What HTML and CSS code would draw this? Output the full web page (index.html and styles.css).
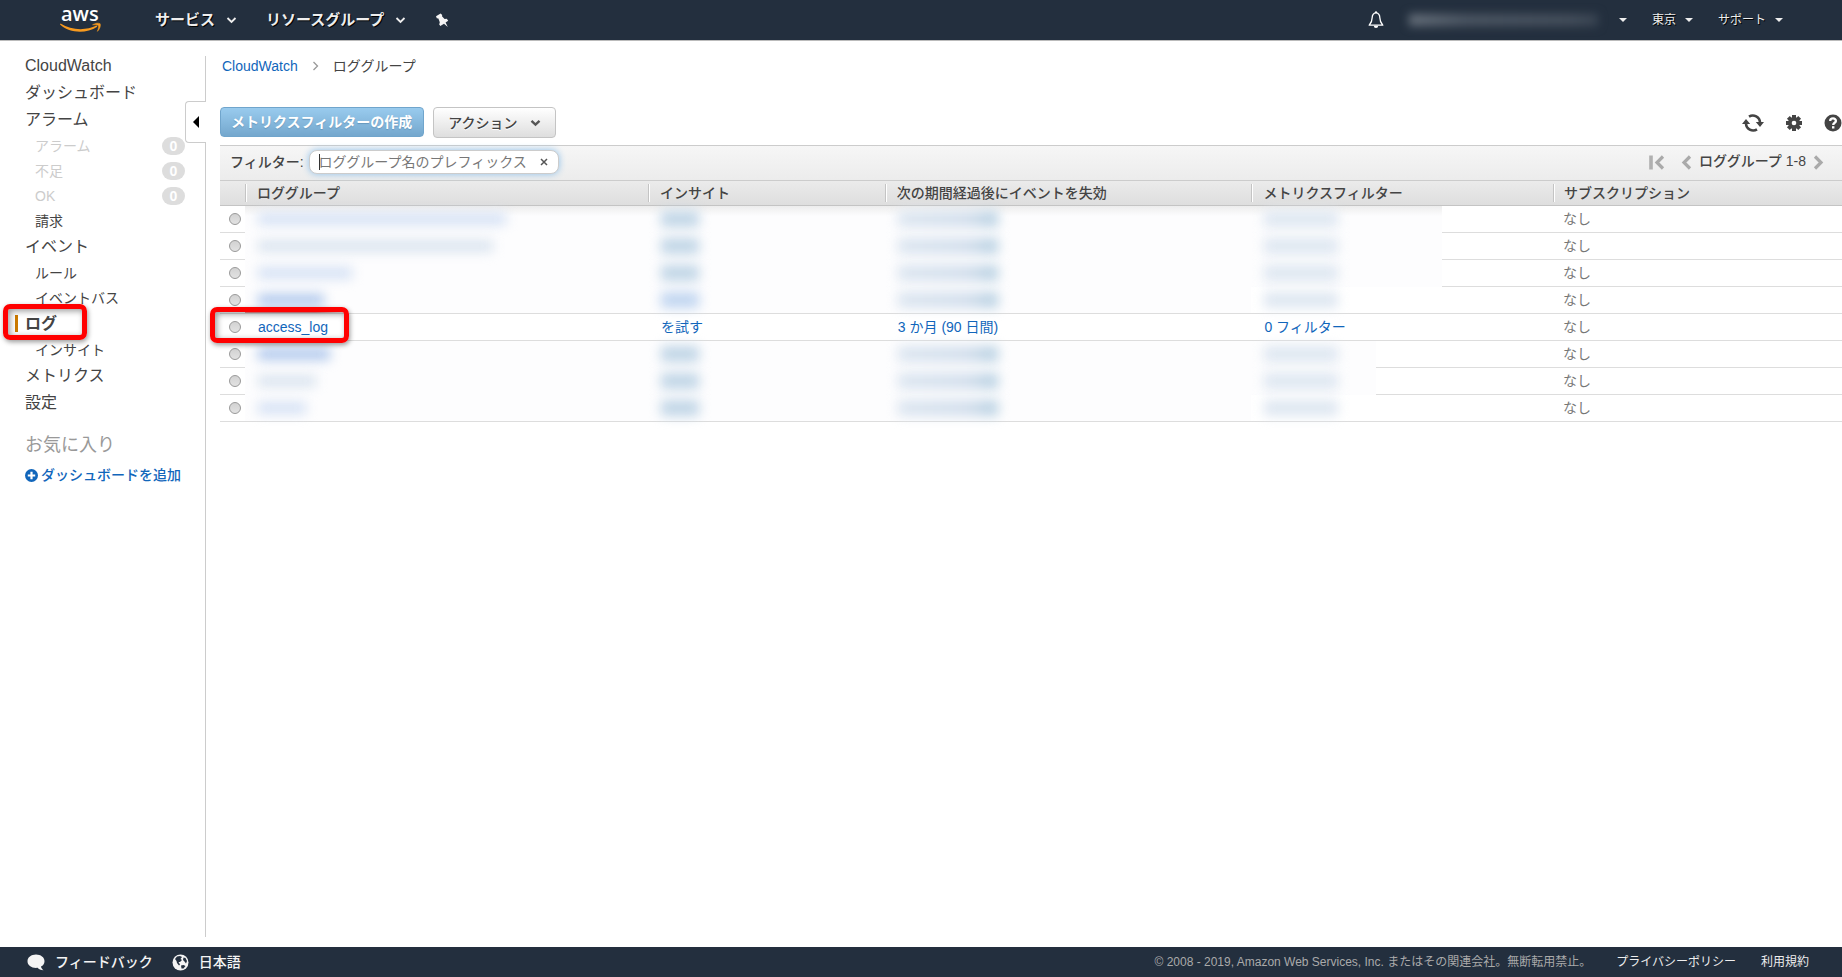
FILE: index.html
```html
<!DOCTYPE html>
<html lang="ja">
<head>
<meta charset="utf-8">
<meta name="viewport" content="width=device-width, initial-scale=1">
<title>CloudWatch ロググループ</title>
<link rel="stylesheet" href="styles.css">
</head>
<body>
<header class="topbar">
  <a class="logo" href="#" aria-label="aws">
    <svg width="44" height="40" viewBox="0 0 44 40">
      <text class="logo-text" x="2" y="21">aws</text>
      <path d="M1.500 23.600C12.500 30.500 27 30.800 37.600 25.600L38.300 26.800C27 34 11 33.600 1 24.600Z" fill="#f79a1f"/>
      <path d="M33.500 24.800C36.500 22.800 40 22.800 41.200 23.800 42 26 40.500 29.500 38.400 31.400 39.300 28.500 40 26.600 39.300 25.600 38.300 24.800 36 24.800 33.500 24.800Z" fill="#f79a1f" stroke="#f79a1f" stroke-width=".5"/>
    </svg>
  </a>
  <nav class="topnav" aria-label="グローバル">
    <button class="topmenu" type="button">サービス
      <svg class="chev" width="11" height="8" viewBox="0 0 11 8"><path d="M1.500 2 5.500 6 9.500 2" fill="none" stroke="#eee" stroke-width="1.800"/></svg></button>
    <button class="topmenu" type="button">リソースグループ
      <svg class="chev" width="11" height="8" viewBox="0 0 11 8"><path d="M1.500 2 5.500 6 9.500 2" fill="none" stroke="#eee" stroke-width="1.800"/></svg></button>
    <button class="topmenu" type="button" aria-label="ピン留め">
      <svg width="14" height="15" viewBox="0 0 14 15"><path d="M1 3.200 5.600 .4 7.200 2 7 3.200 9.600 6 11.800 5.800 13.200 7.800 10.600 9.600 12.800 14 9 10.800 5.400 13 4.200 11.600 4.800 9.200 3.400 5.600 1.800 5.200Z" fill="#f4f4f4"/></svg></button>
  </nav>
  <div class="account">
    <button class="acct bell" type="button" aria-label="通知">
      <svg width="16" height="18" viewBox="0 0 16 18"><path d="M8 1.600C5.300 2.200 4.200 4.200 4.200 6.600 4.200 10.500 3.200 12 1.200 14.200H14.800C12.800 12 11.800 10.500 11.800 6.600 11.800 4.200 10.700 2.200 8 1.600Z" fill="none" stroke="#fff" stroke-width="1.300" stroke-linejoin="round"/><path d="M5.800 14.800A2.200 2.300 0 0 0 10.200 14.800Z" fill="#fff"/><circle cx="8" cy="1.300" r="1.100" fill="#fff"/></svg></button>
    <button class="acct user" type="button" aria-label="アカウント"><span class="user-smear"></span><span class="caret"></span></button>
    <button class="acct" type="button">東京<span class="caret"></span></button>
    <button class="acct" type="button">サポート<span class="caret"></span></button>
  </div>
</header>

<div class="shell">
  <aside class="side">
    <button class="collapse" type="button" aria-label="折りたたむ"><span class="collapse-arrow"></span></button>
    <nav aria-label="CloudWatch">
      <ul class="menu">
        <li><a class="item" href="#">CloudWatch</a></li>
        <li><a class="item" href="#">ダッシュボード</a></li>
        <li><a class="item" href="#">アラーム</a></li>
        <li><a class="item sub off" href="#">アラーム<span class="badge">0</span></a></li>
        <li><a class="item sub off" href="#">不足<span class="badge">0</span></a></li>
        <li><a class="item sub off" href="#">OK<span class="badge">0</span></a></li>
        <li><a class="item sub" href="#">請求</a></li>
        <li><a class="item" href="#">イベント</a></li>
        <li><a class="item sub" href="#">ルール</a></li>
        <li><a class="item sub" href="#">イベントバス</a></li>
        <li><a class="item current" href="#" aria-current="page">ログ<span class="mark mark-side"></span></a></li>
        <li><a class="item sub" href="#">インサイト</a></li>
        <li><a class="item" href="#">メトリクス</a></li>
        <li><a class="item" href="#">設定</a></li>
      </ul>
    </nav>
    <h2 class="fav">お気に入り</h2>
    <a class="add" href="#"><svg width="13" height="13" viewBox="0 0 13 13"><circle cx="6.500" cy="6.500" r="6.500" fill="#1166bb"/><path d="M6.500 2.800V10.200M2.800 6.500H10.200" stroke="#fff" stroke-width="2.200"/></svg>ダッシュボードを追加</a>
  </aside>

  <main class="main">
    <nav class="crumbs" aria-label="パンくず">
      <a href="#">CloudWatch</a>
      <svg width="7" height="10" viewBox="0 0 7 10"><path d="M1.500 1 5.500 5 1.500 9" fill="none" stroke="#999" stroke-width="1.300"/></svg>
      <span>ロググループ</span>
    </nav>
    <div class="actions">
      <button class="btn primary" type="button">メトリクスフィルターの作成</button>
      <button class="btn" type="button">アクション
        <svg width="11" height="8" viewBox="0 0 11 8"><path d="M1.500 1.800 5.500 5.600 9.500 1.800" fill="none" stroke="#555" stroke-width="2.400"/></svg></button>
      <div class="tools">
        <button class="tool" type="button" aria-label="更新">
          <svg width="22" height="20" viewBox="0 0 22 20"><g fill="none" stroke="#444" stroke-width="2.600"><path d="M7 3.600A7.200 7.200 0 0 1 18 9.500"/><path d="M15 16.400A7.200 7.200 0 0 1 4 10.500"/></g><path d="M13.800 9H22L18 14ZM0 11H8.200L4 6Z" fill="#444"/></svg></button>
        <button class="tool" type="button" aria-label="設定">
          <svg width="16" height="16" viewBox="0 0 16 16"><g fill="#444"><rect x="6" y="0" width="4" height="16"/><rect x="6" y="0" width="4" height="16" transform="rotate(45 8 8)"/><rect x="6" y="0" width="4" height="16" transform="rotate(90 8 8)"/><rect x="6" y="0" width="4" height="16" transform="rotate(135 8 8)"/><circle cx="8" cy="8" r="6"/></g><circle cx="8" cy="8" r="2.300" fill="#fff"/></svg></button>
        <button class="tool" type="button" aria-label="ヘルプ">
          <svg width="18" height="18" viewBox="0 0 18 18"><circle cx="9" cy="9" r="8.500" fill="#444"/><path d="M6.200 7C6.200 3.600 12 3.600 11.900 7 11.900 8.800 9.200 8.800 9.200 11" fill="none" stroke="#fff" stroke-width="2.300"/><rect x="8" y="12.200" width="2.400" height="2.300" fill="#fff"/></svg></button>
      </div>
    </div>
    <div class="filterbar">
      <label for="filter">フィルター:</label>
      <div class="search">
        <input id="filter" type="text" placeholder="ロググループ名のプレフィックス">
        <span class="cursor"></span>
        <button class="clear" type="button" aria-label="クリア"><svg width="8" height="8" viewBox="0 0 8 8"><path d="M1 1 7 7M7 1 1 7" stroke="#555" stroke-width="1.500"/></svg></button>
      </div>
      <div class="pager">
        <button type="button" aria-label="最初"><svg width="16" height="15" viewBox="0 0 16 15"><path d="M2 .5V14.500" stroke="#b0b0b0" stroke-width="3.600"/><path d="M14 1.500 8 7.500 14 13.500" fill="none" stroke="#aaa" stroke-width="3.200"/></svg></button>
        <button type="button" aria-label="前へ"><svg width="11" height="15" viewBox="0 0 11 15"><path d="M9 1.500 3 7.500 9 13.500" fill="none" stroke="#aaa" stroke-width="3.200"/></svg></button>
        <span class="range">ロググループ 1-8</span>
        <button type="button" aria-label="次へ"><svg width="11" height="15" viewBox="0 0 11 15"><path d="M2 1.500 8 7.500 2 13.500" fill="none" stroke="#aaa" stroke-width="3.200"/></svg></button>
      </div>
    </div>
    <table class="grid">
      <colgroup><col class="c-pick"><col class="c-name"><col class="c-ins"><col class="c-exp"><col class="c-met"><col></colgroup>
      <thead>
        <tr><th></th><th scope="col">ロググループ</th><th scope="col">インサイト</th><th scope="col">次の期間経過後にイベントを失効</th><th scope="col">メトリクスフィルター</th><th scope="col">サブスクリプション</th></tr>
      </thead>
      <tbody>
        <tr class="hid first"><td><input type="radio" name="g" aria-label="行 1"></td><td class="veil"><span class="smear" style="width:248px"></span></td><td class="veil"><span class="smear ins"></span></td><td class="veil"><span class="smear exp"></span></td><td class="edge"><span class="smear met"></span></td><td>なし</td></tr>
        <tr class="hid"><td><input type="radio" name="g" aria-label="行 2"></td><td class="veil"><span class="smear dim" style="width:235px"></span></td><td class="veil"><span class="smear ins"></span></td><td class="veil"><span class="smear exp"></span></td><td class="edge"><span class="smear met"></span></td><td>なし</td></tr>
        <tr class="hid"><td><input type="radio" name="g" aria-label="行 3"></td><td class="veil"><span class="smear" style="width:94px"></span></td><td class="veil"><span class="smear ins"></span></td><td class="veil"><span class="smear exp"></span></td><td class="edge"><span class="smear met"></span></td><td>なし</td></tr>
        <tr class="hid last"><td><input type="radio" name="g" aria-label="行 4"></td><td class="veil glow"><span class="smear deep" style="width:66px"></span></td><td class="veil"><span class="smear ins blue"></span></td><td class="veil"><span class="smear exp"></span></td><td class="edge"><span class="smear met"></span></td><td>なし</td></tr>
        <tr><td class="marked"><input type="radio" name="g" aria-label="access_log"><span class="mark mark-row"></span></td><td><a class="name" href="#">access_log</a></td><td><a href="#">を試す</a></td><td><a href="#">3 か月 (90 日間)</a></td><td><a href="#">0 フィルター</a></td><td>なし</td></tr>
        <tr class="hid short"><td><input type="radio" name="g" aria-label="行 6"></td><td class="veil"><span class="smear deep" style="width:72px"></span></td><td class="veil"><span class="smear ins"></span></td><td class="veil"><span class="smear exp"></span></td><td class="edge"><span class="smear met"></span></td><td>なし</td></tr>
        <tr class="hid short"><td><input type="radio" name="g" aria-label="行 7"></td><td class="veil"><span class="smear dim" style="width:58px"></span></td><td class="veil"><span class="smear ins"></span></td><td class="veil"><span class="smear exp"></span></td><td class="edge"><span class="smear met"></span></td><td>なし</td></tr>
        <tr class="hid short last"><td><input type="radio" name="g" aria-label="行 8"></td><td class="veil"><span class="smear" style="width:48px"></span></td><td class="veil"><span class="smear ins"></span></td><td class="veil"><span class="smear exp"></span></td><td class="edge"><span class="smear met"></span></td><td>なし</td></tr>
      </tbody>
    </table>
  </main>
</div>

<footer class="foot">
  <a class="foot-main" href="#"><svg width="18" height="17" viewBox="0 0 18 17"><path d="M9 .5C13.700.5 17.500 3.300 17.500 7.200 17.500 9.600 16 11.500 14 12.600 14.300 14.200 15.200 15.400 16.500 16.300 13.800 16.300 11.700 15.300 10.600 13.800 5 14.500.5 11.400.5 7.200.5 3.300 4.300.5 9 .5Z" fill="#f4f4f4"/></svg>フィードバック</a>
  <a class="foot-main" href="#"><svg width="17" height="17" viewBox="0 0 17 17"><circle cx="8.500" cy="8.500" r="8" fill="#f4f4f4"/><path d="M3 5 5 2.500 8 2 10 3 8.500 5 10 6 8 8 6.500 8 8 10.500 7 11.500 5 9 4.500 7ZM11.500 3.500 13.500 4 15 7 14 9.500 12.500 7.500 11 6ZM9 11.500 11.500 11 13.500 12 11.500 14.500 9.500 14.500Z" fill="#232f3e"/></svg>日本語</a>
  <div class="legal">
    <span>© 2008 - 2019, Amazon Web Services, Inc. またはその関連会社。無断転用禁止。</span>
    <a href="#">プライバシーポリシー</a>
    <a href="#">利用規約</a>
  </div>
</footer>
</body>
</html>
```

FILE: styles.css
```css
* { box-sizing: border-box; }

body {
  margin: 0;
  min-height: 100vh;
  display: flex;
  flex-direction: column;
  background: #fff;
  color: #444;
  font: 14px/20px "Liberation Sans", "Noto Sans CJK JP", sans-serif;
}

a { color: #1166bb; text-decoration: none; }
button { margin: 0; padding: 0; border: 0; background: none; font: inherit; color: inherit; }
svg { display: block; flex: none; overflow: visible; }

/* top bar */
.topbar {
  display: flex;
  align-items: center;
  height: 41px;
  padding: 0 59px;
  background: #232f3e;
  border-bottom: 1px solid #bbb;
}
.logo-text { font: 600 20px "Open Sans", sans-serif; fill: #fff; }
.topnav { display: flex; align-items: center; gap: 29px; margin-left: 52px; }
.topmenu {
  display: flex;
  align-items: center;
  gap: 11px;
  color: #eee;
  font-size: 15px;
  font-weight: 700;
  text-shadow: 1px 1px 0 #000;
}
.account { display: flex; align-items: center; gap: 25px; margin-left: auto; }
.acct {
  display: flex;
  align-items: center;
  gap: 9px;
  color: #eee;
  font-size: 12px;
  text-shadow: 1px 1px 0 #000;
}
.user { gap: 21px; }
.user-smear {
  width: 189px;
  height: 12px;
  background: linear-gradient(90deg, #67707b, #4c5663 30%, #454f5c 85%, #3a4553);
  filter: blur(5px);
}
.caret { border: 4px solid transparent; border-top-color: #eee; border-bottom: 0; }

/* page body */
.shell { flex: 1; display: flex; }

.side {
  position: relative;
  flex: none;
  width: 206px;
  padding-top: 11px;
}
.side::after {
  content: "";
  position: absolute;
  top: 15px;
  right: 0;
  bottom: 10px;
  width: 1px;
  background: #ccc;
}
.menu { margin: 0; padding: 0; list-style: none; }
.item {
  position: relative;
  display: flex;
  align-items: center;
  height: 27px;
  padding-left: 25px;
  color: #444;
  font-size: 16px;
}
.sub { height: 25px; padding: 0 21px 0 35px; font-size: 14px; }
.off { color: #ccc; }
.current { font-weight: 700; }
.current::before {
  content: "";
  position: absolute;
  left: 15px;
  width: 3px;
  height: 17px;
  background: #cc7a00;
}
.badge {
  margin-left: auto;
  width: 23px;
  height: 18px;
  border-radius: 9px;
  background: #ddd;
  color: #fff;
  font-weight: 700;
  line-height: 18px;
  text-align: center;
}
.collapse {
  position: absolute;
  z-index: 1;
  top: 60px;
  right: 0;
  width: 21px;
  height: 42px;
  background: #fff;
  border: 1px solid #ccc;
  border-right: 0;
  border-radius: 4px 0 0 4px;
}
.collapse-arrow {
  display: block;
  width: 6px;
  margin-left: 7px;
  border: 6px solid transparent;
  border-right-color: #000;
  border-left: 0;
}
.fav { margin: 17px 0 0 25px; color: #999; font-size: 18px; font-weight: 400; line-height: 24px; }
.add {
  display: flex;
  align-items: center;
  gap: 3px;
  margin: 8px 0 0 25px;
  font-weight: 500;
}

/* highlight frames */
.mark {
  position: absolute;
  height: 36px;
  border: 5px solid #f00;
  border-radius: 7px;
  box-shadow: 1px 2px 5px rgba(0, 0, 0, .4), inset 2px 2px 6px rgba(0, 0, 0, .4);
  pointer-events: none;
}
.mark-side { top: -6px; left: 3px; width: 84px; }
.mark-row { z-index: 2; top: -7px; left: -10px; width: 139px; }

/* main column */
.main { flex: 1; min-width: 0; padding: 15px 0 0 14px; }
.crumbs { display: flex; align-items: center; gap: 14px; padding-left: 2px; }
.actions { display: flex; align-items: flex-start; gap: 9px; margin: 31px 0 7px; }
.btn {
  display: flex;
  align-items: center;
  gap: 12px;
  height: 31px;
  padding: 0 14px;
  border: 1px solid #c4c4c4;
  border-radius: 4px;
  background: linear-gradient(#fff, #dedede);
  color: #444;
  font-weight: 500;
  text-shadow: 0 1px 0 #fff;
}
.primary {
  height: 30px;
  padding: 0 11px 0 10px;
  border-color: #70a5cc;
  background: linear-gradient(#99cbee, #74a7cd);
  color: #fff;
  font-weight: 700;
  text-shadow: 0 1px 1px #6698bd;
}
.tools { display: flex; align-items: center; gap: 22px; align-self: center; margin: 0 0 0 auto; }

.filterbar {
  display: flex;
  align-items: center;
  height: 36px;
  padding: 0 18px 2px 10px;
  border-top: 1px solid #ccc;
  border-bottom: 1px solid #ccc;
  background: linear-gradient(#f6f6f6, #ececec);
  font-weight: 500;
}
.search { position: relative; margin-left: 5px; }
.search input {
  display: block;
  width: 250px;
  height: 24px;
  padding: 0 32px 0 9px;
  border: 1px solid #ccc;
  border-radius: 8px;
  outline: 0;
  background: #fff;
  box-shadow: 0 0 7px #8fc1ea;
  font: inherit;
  font-weight: 400;
}
.search input::placeholder { color: #777; opacity: 1; }
.cursor { position: absolute; top: 4px; left: 10px; width: 1px; height: 16px; background: #333; }
.clear { position: absolute; top: 8px; right: 11px; }
.pager { display: flex; align-items: center; gap: 7px; margin-left: auto; }
.pager button:first-child { margin-right: 9px; }
.range { padding-bottom: 3px; }

/* log group table */
.grid { width: 100%; table-layout: fixed; border-collapse: separate; border-spacing: 0; }
.c-pick { width: 25px; }
.c-name { width: 24.850%; }
.c-ins { width: 14.600%; }
.c-exp { width: 22.600%; }
.c-met { width: 18.600%; }
.grid th {
  height: 25px;
  padding: 0 0 0 12px;
  border-bottom: 1px solid #c4c4c4;
  background:
    linear-gradient(90deg, #c4c4c4 50%, #fff 50%) 0 50% / 2px 18px no-repeat,
    linear-gradient(#ebebeb, #dedede);
  font-weight: 500;
  text-align: left;
}
.grid th:first-child { background: linear-gradient(#ebebeb, #dedede); }
.grid th:last-child { padding-left: 11px; }
.grid td {
  height: 27px;
  padding: 0 0 0 13px;
  border-bottom: 1px solid #ddd;
}
.grid td:last-child { padding-left: 10px; color: #777; }
.grid td:first-child { position: relative; padding: 0 0 0 9px; }
.grid input {
  appearance: none;
  display: block;
  width: 12px;
  height: 12px;
  margin: 0;
  border: 1px solid #999;
  border-radius: 50%;
  background: linear-gradient(#d2d2d2, #e2e2e2);
}

/* rows whose values are obscured */
.hid .veil { border-bottom-color: #fdfdfe; background: #fdfdfe; }
.hid.first .veil { background: linear-gradient(#ededed, #fdfdfe 10px); }
.hid .edge {
  padding-bottom: 1px;
  border-bottom: 0;
  background:
    linear-gradient(#ddd, #ddd) 100% 100% / calc(100% - 191px) 1px no-repeat,
    linear-gradient(#fdfdfe, #fdfdfe) 0 0 / 191px 100% no-repeat;
}
.hid.first .edge {
  background:
    linear-gradient(#ddd, #ddd) 100% 100% / calc(100% - 191px) 1px no-repeat,
    linear-gradient(#ededed, #fdfdfe 10px) 0 0 / 191px 100% no-repeat;
}
.hid.short .edge {
  background:
    linear-gradient(#ddd, #ddd) 100% 100% / calc(100% - 125px) 1px no-repeat,
    linear-gradient(#fdfdfe, #fdfdfe) 0 0 / 125px 100% no-repeat;
}
.hid.last .veil { border-bottom-color: #ddd; }
.hid.last .edge { padding-bottom: 0; border-bottom: 1px solid #ddd; background: none; }
.smear { display: block; height: 12px; background: #d5e1f4; filter: blur(6px); }
.dim { background: #dae4ef; }
.deep { background: #b0c8ec; }
.ins { width: 38px; height: 16px; background: #c0d5e6; }
.ins.blue { background: #c0d5f0; }
.exp { width: 100px; height: 16px; background: linear-gradient(90deg, #dbe5f0, #d2deec 70%, #b5cfe1); }
.met { width: 74px; height: 16px; background: #dee7f1; }
.hid.last .glow { background: linear-gradient(90deg, #ff8c8c 70%, transparent) 0 100% / 100px 4px no-repeat, #fdfdfe; }

/* footer */
.foot {
  display: flex;
  align-items: center;
  height: 30px;
  padding: 0 33px 0 27px;
  gap: 19px;
  background: #232f3e;
}
.foot-main { display: flex; align-items: center; gap: 10px; color: #f4f4f4; font-weight: 500; }
.legal { display: flex; gap: 25px; margin-left: auto; color: #aaa; font-size: 12px; }
.legal a { color: #eee; }
```
